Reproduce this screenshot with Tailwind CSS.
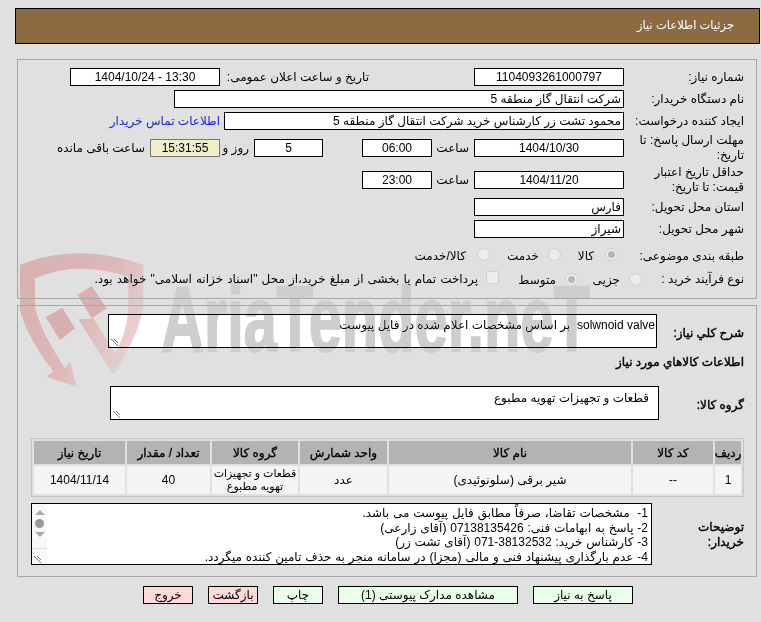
<!doctype html>
<html dir="rtl"><head><meta charset="utf-8"><script src="https://cdn.jsdelivr.net/npm/@tailwindcss/browser@4"></script></head>
<body class="bg-[#e0e0e0] font-['Liberation_Sans','DejaVu_Sans',sans-serif] text-[12px] text-black overflow-hidden">
<div class="relative isolate bg-[#e0e0e0] w-[761px] h-[622px] overflow-hidden">

  <div class="relative flex flex-col pr-[1px] pl-[15px] pt-[8px]">
    <div class="h-[36px] border border-black bg-[#8b6b3f] flex items-center pr-[25px] text-white text-[11.5px]">جزئیات اطلاعات نیاز</div>

    <div class="mt-[15px] ml-[2px] mr-[3px] h-[240px] border border-[#a8a8a8] pr-[12px] pt-[8px] flex flex-col">
      <div class="flex items-center h-[18px] mb-[4px]">
        <div class="w-[120px]">شماره نیاز:</div>
        <div class="w-[150px] h-[18px] border border-black bg-white flex items-center justify-center">1104093261000797</div>
        <div class="w-[254px] pr-[105px] whitespace-nowrap">تاریخ و ساعت اعلان عمومی:</div>
        <div class="w-[150px] h-[18px] border border-black bg-white flex items-center justify-center">13:30 - 1404/10/24</div>
      </div>
      <div class="flex items-center h-[18px] mb-[4px]">
        <div class="w-[120px]">نام دستگاه خریدار:</div>
        <div class="w-[450px] h-[18px] border border-black bg-white flex items-center px-[2px]">شرکت انتقال گاز منطقه 5</div>
      </div>
      <div class="flex items-center h-[18px] mb-[9px]">
        <div class="w-[120px] whitespace-nowrap">ایجاد کننده درخواست:</div>
        <div class="w-[400px] h-[18px] border border-black bg-white flex items-center px-[2px]">محمود تشت زر کارشناس خرید شرکت انتقال گاز منطقه 5</div>
        <div class="mr-[4px] text-[#2222dd] whitespace-nowrap">اطلاعات تماس خریدار</div>
      </div>
      <div class="flex items-center h-[18px] mb-[14px]">
        <div class="w-[120px] leading-[15px]">مهلت ارسال پاسخ: تا تاریخ:</div>
        <div class="w-[150px] h-[18px] border border-black bg-white flex items-center justify-center">1404/10/30</div>
        <div class="w-[42px] pr-[5px]">ساعت</div>
        <div class="w-[70px] h-[18px] border border-black bg-white flex items-center justify-center">06:00</div>
        <div class="w-[39px]"></div>
        <div class="w-[69px] h-[18px] border border-black bg-white flex items-center justify-center">5</div>
        <div class="w-[34px] pr-[5px] whitespace-nowrap">روز و</div>
        <div class="w-[70px] h-[18px] border border-[#777] bg-[#f0edcc] flex items-center justify-center">15:31:55</div>
        <div class="pr-[5px] whitespace-nowrap">ساعت باقی مانده</div>
      </div>
      <div class="flex items-center h-[18px] mb-[9px]">
        <div class="w-[120px] leading-[15px]">حداقل تاریخ اعتبار قیمت: تا تاریخ:</div>
        <div class="w-[150px] h-[18px] border border-black bg-white flex items-center justify-center">1404/11/20</div>
        <div class="w-[42px] pr-[5px]">ساعت</div>
        <div class="w-[70px] h-[18px] border border-black bg-white flex items-center justify-center">23:00</div>
      </div>
      <div class="flex items-center h-[18px] mb-[4px]">
        <div class="w-[120px]">استان محل تحویل:</div>
        <div class="w-[150px] h-[18px] border border-black bg-white flex items-center px-[2px]">فارس</div>
      </div>
      <div class="flex items-center h-[18px] mb-[7px]">
        <div class="w-[120px]">شهر محل تحویل:</div>
        <div class="w-[150px] h-[18px] border border-black bg-white flex items-center px-[2px]">شیراز</div>
      </div>
      <div class="flex items-center h-[18px] mb-[7px]">
        <div class="w-[126px] pt-[3px]">طبقه بندی موضوعی:</div>
        <div class="w-[13px] h-[13px] shrink-0 rounded-full border border-[#d0d0d0] bg-[#ececec] flex items-center justify-center"><div class="w-[7px] h-[7px] rounded-full bg-[#b8b8b8]"></div></div>
        <div class="w-[44px] pr-[11px] pt-[3px]">کالا</div>
        <div class="w-[13px] h-[13px] shrink-0 rounded-full border border-[#d0d0d0] bg-[#ececec]"></div>
        <div class="w-[58px] pr-[9px] pt-[3px]">خدمت</div>
        <div class="w-[13px] h-[13px] shrink-0 rounded-full border border-[#d0d0d0] bg-[#ececec]"></div>
        <div class="pr-[11px] pt-[3px]">کالا/خدمت</div>
      </div>
      <div class="flex items-center h-[18px]">
        <div class="w-[102px] whitespace-nowrap">نوع فرآیند خرید :</div>
        <div class="w-[13px] h-[13px] shrink-0 rounded-full border border-[#d0d0d0] bg-[#ececec]"></div>
        <div class="w-[51px] pr-[9px] pt-[2px]">جزیی</div>
        <div class="w-[13px] h-[13px] shrink-0 rounded-full border border-[#d0d0d0] bg-[#ececec] flex items-center justify-center"><div class="w-[7px] h-[7px] rounded-full bg-[#b8b8b8]"></div></div>
        <div class="w-[66px] pr-[9px] pt-[2px]">متوسط</div>
        <div class="w-[13px] h-[13px] shrink-0 -mt-[4px] rounded-[2px] border border-[#d0d0d0] bg-[#ececec]"></div>
        <div class="pr-[8px] whitespace-nowrap [word-spacing:.8px]">پرداخت تمام یا بخشی از مبلغ خرید،از محل "اسناد خزانه اسلامی" خواهد بود.</div>
      </div>
    </div>

    <div class="mt-[6px] ml-[2px] mr-[3px] h-[272px] border border-[#a8a8a8] pr-[12px] pt-[8px] flex flex-col">
      <div class="flex items-start h-[34px]">
        <div class="w-[87px] pt-[10px] whitespace-nowrap [-webkit-text-stroke:0.4px_#000]">شرح کلي نیاز:</div>
        <div class="relative w-[549px] h-[34px] border border-black bg-white pr-[1px] pt-[1px] whitespace-nowrap">solwnoid valve&nbsp; بر اساس مشخصات اعلام شده در فایل پیوست
          <svg class="absolute left-[1px] bottom-0" width="9" height="9"><path d="M1 1L8 8M4 1L8 5" stroke="#777" fill="none"/></svg></div>
      </div>
      <div class="mt-[6px] h-[16px] flex items-center [-webkit-text-stroke:0.4px_#000]">اطلاعات کالاهاي مورد نیاز</div>
      <div class="flex items-start mt-[16px] h-[34px]">
        <div class="w-[85px] pt-[10px] [-webkit-text-stroke:0.4px_#000]">گروه کالا:</div>
        <div class="relative w-[549px] h-[34px] border border-black bg-white pr-[9px] pt-[2px]">قطعات و تجهیزات تهویه مطبوع
          <svg class="absolute left-[1px] bottom-0" width="9" height="9"><path d="M1 1L8 8M4 1L8 5" stroke="#777" fill="none"/></svg></div>
      </div>
      <div class="mt-[18px] w-[713px] border border-[#c4c4c4] p-[2px]">
        <div class="grid grid-cols-[26px_80px_242px_87px_86px_83px_91px] gap-[2px]">
          <div class="h-[23px] bg-[#b3b3b3] flex items-center justify-center whitespace-nowrap [-webkit-text-stroke:0.3px_#000]">ردیف</div>
          <div class="h-[23px] bg-[#b3b3b3] flex items-center justify-center whitespace-nowrap [-webkit-text-stroke:0.3px_#000]">کد کالا</div>
          <div class="h-[23px] bg-[#b3b3b3] flex items-center justify-center whitespace-nowrap [-webkit-text-stroke:0.3px_#000]">نام کالا</div>
          <div class="h-[23px] bg-[#b3b3b3] flex items-center justify-center whitespace-nowrap [-webkit-text-stroke:0.3px_#000]">واحد شمارش</div>
          <div class="h-[23px] bg-[#b3b3b3] flex items-center justify-center whitespace-nowrap [-webkit-text-stroke:0.3px_#000]">گروه کالا</div>
          <div class="h-[23px] bg-[#b3b3b3] flex items-center justify-center whitespace-nowrap [-webkit-text-stroke:0.3px_#000]">تعداد / مقدار</div>
          <div class="h-[23px] bg-[#b3b3b3] flex items-center justify-center whitespace-nowrap [-webkit-text-stroke:0.3px_#000]">تاریخ نیاز</div>
          <div class="h-[28px] bg-[#f5f5f5] flex items-center justify-center">1</div>
          <div class="h-[28px] bg-[#f5f5f5] flex items-center justify-center">--</div>
          <div class="h-[28px] bg-[#f5f5f5] flex items-center justify-center">شیر برقی (سلونوئیدی)</div>
          <div class="h-[28px] bg-[#f5f5f5] flex items-center justify-center">عدد</div>
          <div class="h-[28px] bg-[#f5f5f5] flex items-center justify-center text-center text-[11px] leading-[13px] whitespace-nowrap">قطعات و تجهیزات<br>تهویه مطبوع</div>
          <div class="h-[28px] bg-[#f5f5f5] flex items-center justify-center">40</div>
          <div class="h-[28px] bg-[#f5f5f5] flex items-center justify-center">1404/11/14</div>
        </div>
      </div>
      <div class="flex items-start mt-[6px]">
        <div class="w-[92px] pt-[17px] leading-[15px] [-webkit-text-stroke:0.4px_#000]">توضیحات<br>خریدار:</div>
        <div class="relative w-[621px] h-[62px] border border-black bg-white pr-[3px] leading-[14.5px] pt-[2px] whitespace-nowrap [word-spacing:.5px]">
          <div>1-&nbsp; مشخصات تقاضا، صرفاً مطابق فایل پیوست می باشد.</div>
          <div>2- پاسخ به ابهامات فنی: 07138135426 (آقای زارعی)</div>
          <div>3- کارشناس خرید: 38132532-071 (آقای تشت زر)</div>
          <div>4- عدم بارگذاری پیشنهاد فنی و مالی (مجزا) در سامانه منجر به حذف تامین کننده میگردد.</div>
          <div class="absolute left-0 top-0 w-[15px] h-[60px] bg-[#f8f8f8] flex flex-col items-center pt-[6px] gap-[4px]">
            <div class="w-0 h-0 border-x-[5px] border-x-transparent border-b-[5px] border-b-[#aaa]"></div>
            <div class="w-[9px] h-[9px] rounded-full bg-[#999]"></div>
            <div class="w-0 h-0 border-x-[5px] border-x-transparent border-t-[5px] border-t-[#aaa]"></div>
            <div class="mt-[7px] w-full border-t border-[#ddd]"></div>
            <svg class="absolute left-[1px] bottom-0" width="9" height="9"><path d="M1 1L8 8M4 1L8 5" stroke="#777" fill="none"/></svg>
          </div>
        </div>
      </div>
    </div>

    <div class="mt-[9px] flex mr-[127px]">
      <div class="w-[100px] h-[18px] border border-black bg-[#eaffea] flex items-center justify-center">پاسخ به نیاز</div>
      <div class="w-[180px] h-[18px] mr-[15px] border border-black bg-[#eaffea] flex items-center justify-center">مشاهده مدارک پیوستی (1)</div>
      <div class="w-[50px] h-[18px] mr-[15px] border border-black bg-[#eaffea] flex items-center justify-center">چاپ</div>
      <div class="w-[50px] h-[18px] mr-[15px] border border-black bg-[#ffd9d9] flex items-center justify-center whitespace-nowrap">بازگشت</div>
      <div class="w-[50px] h-[18px] mr-[15px] border border-black bg-[#ffd9d9] flex items-center justify-center">خروج</div>
    </div>
  </div>

  <svg class="absolute left-[10px] top-[240px] mix-blend-darken pointer-events-none" width="340" height="150" viewBox="0 0 1020 450">
    <defs><linearGradient id="g" x1="0" y1="0" x2="1" y2="0.6"><stop offset="0" stop-color="#d8b0b0"/><stop offset="0.6" stop-color="#dcb8b8"/><stop offset="1" stop-color="#f0d2d2"/></linearGradient></defs>
    <path d="M30 75 Q200 5 400 75 L400 200 Q385 290 310 405 L205 238 L250 235 L315 340 Q355 270 355 200 L355 110 Q200 60 75 115 L75 200 Q90 270 165 385 L180 365 L200 440 L110 410 L130 395 Q50 290 30 210 Z" fill="url(#g)"/>
    <path d="M107 232 L157 203 L195 265 L150 300Z M203 165 L245 138 L290 205 L245 235Z" fill="#d8aeae"/>
  </svg>
  <div dir="ltr" class="absolute left-[161px] top-[273px] w-[720px] h-[93px] origin-top-left [transform:scaleX(.64)] text-[93px] leading-none font-bold text-[#cecece] [-webkit-text-stroke:2px_#cecece] font-['Liberation_Sans',sans-serif] whitespace-nowrap mix-blend-darken pointer-events-none">AriaTender.neT</div>
</div>
</body></html>
